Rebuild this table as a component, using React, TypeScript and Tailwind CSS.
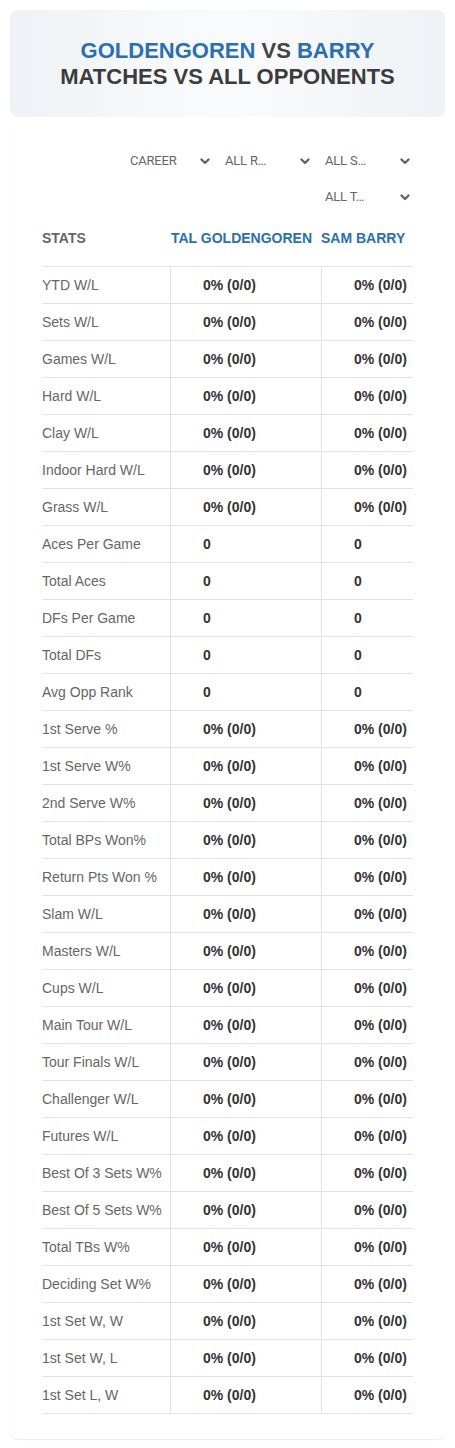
import { useState } from "react";

type Row = {
  label: string
  a: string
  b: string
}

const pct = "0% (0/0)"

const rows: Row[] = [
  { label: "YTD W/L", a: pct, b: pct },
  { label: "Sets W/L", a: pct, b: pct },
  { label: "Games W/L", a: pct, b: pct },
  { label: "Hard W/L", a: pct, b: pct },
  { label: "Clay W/L", a: pct, b: pct },
  { label: "Indoor Hard W/L", a: pct, b: pct },
  { label: "Grass W/L", a: pct, b: pct },
  { label: "Aces Per Game", a: "0", b: "0" },
  { label: "Total Aces", a: "0", b: "0" },
  { label: "DFs Per Game", a: "0", b: "0" },
  { label: "Total DFs", a: "0", b: "0" },
  { label: "Avg Opp Rank", a: "0", b: "0" },
  { label: "1st Serve %", a: pct, b: pct },
  { label: "1st Serve W%", a: pct, b: pct },
  { label: "2nd Serve W%", a: pct, b: pct },
  { label: "Total BPs Won%", a: pct, b: pct },
  { label: "Return Pts Won %", a: pct, b: pct },
  { label: "Slam W/L", a: pct, b: pct },
  { label: "Masters W/L", a: pct, b: pct },
  { label: "Cups W/L", a: pct, b: pct },
  { label: "Main Tour W/L", a: pct, b: pct },
  { label: "Tour Finals W/L", a: pct, b: pct },
  { label: "Challenger W/L", a: pct, b: pct },
  { label: "Futures W/L", a: pct, b: pct },
  { label: "Best Of 3 Sets W%", a: pct, b: pct },
  { label: "Best Of 5 Sets W%", a: pct, b: pct },
  { label: "Total TBs W%", a: pct, b: pct },
  { label: "Deciding Set W%", a: pct, b: pct },
  { label: "1st Set W, W", a: pct, b: pct },
  { label: "1st Set W, L", a: pct, b: pct },
  { label: "1st Set L, W", a: pct, b: pct },
]

const Chevron = () => (
  <svg width="10" height="7" viewBox="0 0 10 7" className="shrink-0">
    <polyline points="1.5,1.5 5,5 8.5,1.5" fill="none" stroke="#666" strokeWidth="2.4" strokeLinecap="round" strokeLinejoin="round" />
  </svg>
)

const Select = ({ label, first, onClick }: { label: string; first?: boolean; onClick?: () => void }) => (
  <button
    onClick={onClick}
    className={`flex items-center justify-between w-[100px] h-[36px] pr-[3px] text-[13px] tracking-[-0.2px] text-[#666] font-[family-name:Roboto,sans-serif] ${first ? "pl-[17px]" : "pl-3"}`}
  >
    <span>{label}</span>
    <Chevron />
  </button>
)

const App = () => {
  const [period] = useState("CAREER")

  return (
    <div className="w-full min-h-[1448px] bg-white p-[10px] font-[family-name:Liberation_Sans,Arial,sans-serif]">
      {/* title card */}
      <div className="flex flex-col items-center justify-center h-[107px] rounded-lg bg-gradient-to-r from-[#eef2f6] via-[#fafbfc] to-[#eef2f6] text-[22px] font-bold leading-[26px] pt-[1px]">
        <p>
          <span className="text-[#2a6fb3]">GOLDENGOREN</span>
          <span className="text-[#444]"> VS </span>
          <span className="text-[#2a6fb3]">BARRY</span>
        </p>
        <p className="text-[#3c3c3c]">MATCHES VS ALL OPPONENTS</p>
      </div>

      {/* stats card */}
      <div className="rounded-lg bg-white px-8 pt-[26px] pb-[25px] shadow-[0_1px_1px_rgba(0,0,0,0.08)]">
        <div className="flex flex-wrap justify-end">
          <Select label={period} first />
          <Select label="ALL R…" />
          <Select label="ALL S…" />
          <Select label="ALL T…" />
        </div>

        <div className="grid grid-cols-[128px_151px_1fr] h-[51px] items-center pb-1 text-[14px] font-bold">
          <span className="text-[#666]">STATS</span>
          <span className="text-[#2a6fb3] pl-[1px] whitespace-nowrap">TAL GOLDENGOREN</span>
          <span className="text-[#2a6fb3] whitespace-nowrap">SAM BARRY</span>
        </div>

        <div className="border-t border-[#e2e2e2]">
          {rows.map((r) => (
            <div key={r.label} className="grid grid-cols-[128px_151px_1fr] h-[37px] border-b border-[#e2e2e2] text-[14px]">
              <span className="flex items-center text-[#666] whitespace-nowrap">{r.label}</span>
              <span className="flex items-center border-l border-[#e2e2e2] pl-[32px] font-bold text-[#333]">{r.a}</span>
              <span className="flex items-center border-l border-[#e2e2e2] pl-[32px] font-bold text-[#333]">{r.b}</span>
            </div>
          ))}
        </div>
      </div>
    </div>
  );
}

export default App;
